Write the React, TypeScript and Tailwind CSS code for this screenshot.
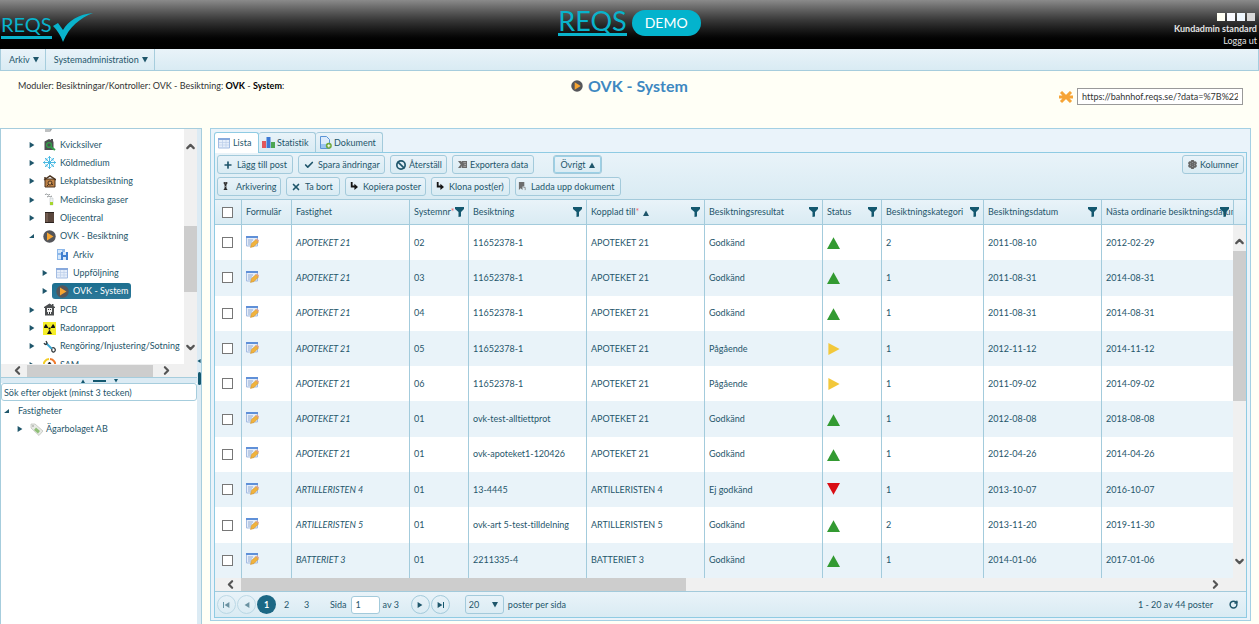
import React, { useState } from 'react';
import { ChevronUp, ChevronDown, ChevronLeft, ChevronRight, Plus, Check, Ban, X, Settings, RotateCw } from 'lucide-react';

type Status = 'ok' | 'pending' | 'failed';

interface Inspection {
  property: string;
  system: string;
  inspection: string;
  status: Status;
  category: number;
  date: string;
  next: string;
}

const inspections: Inspection[] = [
  { property: 'APOTEKET 21', system: '02', inspection: '11652378-1', status: 'ok', category: 2, date: '2011-08-10', next: '2012-02-29' },
  { property: 'APOTEKET 21', system: '03', inspection: '11652378-1', status: 'ok', category: 1, date: '2011-08-31', next: '2014-08-31' },
  { property: 'APOTEKET 21', system: '04', inspection: '11652378-1', status: 'ok', category: 1, date: '2011-08-31', next: '2014-08-31' },
  { property: 'APOTEKET 21', system: '05', inspection: '11652378-1', status: 'pending', category: 1, date: '2012-11-12', next: '2014-11-12' },
  { property: 'APOTEKET 21', system: '06', inspection: '11652378-1', status: 'pending', category: 1, date: '2011-09-02', next: '2014-09-02' },
  { property: 'APOTEKET 21', system: '01', inspection: 'ovk-test-alltiettprot', status: 'ok', category: 1, date: '2012-08-08', next: '2018-08-08' },
  { property: 'APOTEKET 21', system: '01', inspection: 'ovk-apoteket1-120426', status: 'ok', category: 1, date: '2012-04-26', next: '2014-04-26' },
  { property: 'ARTILLERISTEN 4', system: '01', inspection: '13-4445', status: 'failed', category: 1, date: '2013-10-07', next: '2016-10-07' },
  { property: 'ARTILLERISTEN 5', system: '01', inspection: 'ovk-art 5-test-tilldelning', status: 'ok', category: 2, date: '2013-11-20', next: '2019-11-30' },
  { property: 'BATTERIET 3', system: '01', inspection: '2211335-4', status: 'ok', category: 1, date: '2014-01-06', next: '2017-01-06' },
];

const resultText: Record<Status, string> = {
  ok: 'Godkänd',
  pending: 'Pågående',
  failed: 'Ej godkänd',
};

const columns = [
  { title: 'Formulär', width: 'w-[50px]' },
  { title: 'Fastighet', width: 'w-[118px]' },
  { title: 'Systemnr', width: 'w-[59px]', required: true, filter: true },
  { title: 'Besiktning', width: 'w-[118px]', filter: true },
  { title: 'Kopplad till', width: 'w-[118px]', required: true, sorted: true, filter: true },
  { title: 'Besiktningsresultat', width: 'w-[118px]', filter: true },
  { title: 'Status', width: 'w-[59px]', filter: true },
  { title: 'Besiktningskategori', width: 'w-[102px]', filter: true },
  { title: 'Besiktningsdatum', width: 'w-[118px]', filter: true },
  { title: 'Nästa ordinarie besiktningsdatum', width: '', filter: true },
];

const barGradient = 'bg-linear-to-b from-[#e9f3f9] to-[#d9ebf3]';
const buttonStyle = `flex h-[19px] items-center rounded-[3px] border border-[#a3cadb] ${barGradient} whitespace-nowrap`;

/* Icons */

const TriangleIcon = ({ dir, className = 'size-[6px]' }: { dir: 'up' | 'down' | 'right' | 'left'; className?: string }) => {
  const points = {
    up: '5,1 10,10 0,10',
    down: '0,0 10,0 5,9',
    right: '1,0 9,5 1,10',
    left: '9,0 1,5 9,10',
  };
  return (
    <svg viewBox="0 0 10 10" preserveAspectRatio="none" className={`shrink-0 fill-current ${className}`}>
      <polygon points={points[dir]} />
    </svg>
  );
};

const OpenNodeIcon = () => (
  <svg viewBox="0 0 6 6" className="size-[6px] shrink-0 fill-current">
    <path d="M5 1v4H0z" />
  </svg>
);

const PlayIcon = ({ className = 'size-[13px]' }: { className?: string }) => (
  <svg viewBox="0 0 13 13" className={`shrink-0 ${className}`}>
    <circle cx="6.5" cy="6.5" r="6.2" fill="#55565a" />
    <path d="M4 2.500l6.500 4-6.500 4z" fill="#f7a531" />
  </svg>
);

const FilterIcon = () => (
  <svg viewBox="0 0 9 10" className="h-[10px] w-[9px] fill-[#14586f]">
    <path d="M0 0h9v2L6 5v4.500L3.500 10V5L0 2z" />
  </svg>
);

const HouseIcon = ({ kind }: { kind: 'search' | 'play' | 'skull' }) => (
  <svg viewBox="0 0 13 13" className="size-[13px] shrink-0">
    {kind === 'play' && (
      <>
        <path d="M2 4h10v8H2z" fill="#bd8145" stroke="#4c3521" />
        <path d="M1 5l6-4 6 4M2 2v3" fill="none" stroke="#4c3521" strokeWidth="1.500" />
        <circle cx="7" cy="8" r="2" fill="#d9a365" stroke="#4c3521" />
        <path d="M4 11l2-2M8 8l2 2" stroke="#4c3521" />
      </>
    )}
    {kind === 'search' && (
      <>
        <path d="M1.500 3.500L6 1l2 1V1h2v2l.5 1v8h-9z" fill="#4d4f51" />
        <circle cx="6" cy="7" r="2.400" fill="none" stroke="#32a14a" strokeWidth="1.300" />
        <path d="M8 9l4 3" stroke="#32a14a" strokeWidth="2" />
      </>
    )}
    {kind === 'skull' && (
      <>
        <path d="M1 4l5.500-3.500L9 2V1h1.500v2L12 4v1h-1v7.500H2V5H1z" fill="#4d4f51" />
        <path d="M4 5h5v4H8v2H5V9H4z" fill="#f0f0f0" />
        <path d="M5 6h1v1H5zM7 6h1v1H7zM6 9h1v2H6z" fill="#333" />
      </>
    )}
  </svg>
);

const SnowIcon = () => (
  <svg viewBox="0 0 13 13" className="size-[13px] shrink-0" fill="none" stroke="#49b9e3">
    <path d="M6.500 0v13M0 6.500h13M2 2l9 9M11 2l-9 9" strokeWidth="1" />
    <path d="M5 1l1.500 1.500L8 1M5 12l1.500-1.500L8 12M1 5l1.500 1.500L1 8M12 5l-1.500 1.500L12 8M2 4h2V2M9 2v2h2M2 9h2v2M9 11V9h2" strokeWidth=".8" />
  </svg>
);

const GasIcon = () => (
  <svg viewBox="0 0 13 13" className="size-[13px] shrink-0">
    <path d="M2 2c2-3 3 2 5-1M4 4c2-2 3 1 5-1" fill="none" stroke="#8b9092" />
    <path d="M7 5h3v7H7z" fill="#eef1f2" stroke="#b7bdc0" strokeWidth=".5" />
    <path d="M7 9h3v3H7z" fill="#a6d62c" />
  </svg>
);

const BarrelIcon = () => (
  <svg viewBox="0 0 13 13" className="size-[13px] shrink-0">
    <path d="M2.500 1h8l.5 1v9l-.5 1h-8L2 11V2z" fill="#5a473d" />
    <path d="M2 1.500h9M2 11.500h9" stroke="#2c2320" />
    <path d="M4 2v9" stroke="#8a7567" />
  </svg>
);

const ArchiveIcon = () => (
  <svg viewBox="0 0 13 13" className="size-[13px] shrink-0">
    <path d="M1 1h8v11H1z" fill="#8db8ea" />
    <path d="M2 2h4v3H2zM2 7h3v4H2z" fill="#d6e8fb" />
    <path d="M5 4h7v8H5z" fill="#3f7fd0" />
    <path d="M7 4h3v3H7zM7 9h3v3H7z" fill="#d6e8fb" />
  </svg>
);

const TableIcon = ({ pencil = false }: { pencil?: boolean }) => (
  <svg viewBox="0 0 13 13" className="size-[13px] shrink-0">
    <path d="M.5 1.500h11v9.500H.5z" fill="#e6eefa" stroke="#a3bce2" />
    <path d="M0 1h12v2H0z" fill={pencil ? '#5f90d8' : '#88a9dc'} />
    {pencil ? (
      <>
        <path d="M2 5h5M2 7h4M2 9h3" stroke="#7d9ac6" strokeWidth=".8" />
        <path d="M4.500 12.500l1-4 4.500-4 2.500 2.500-4.500 4.500z" fill="#f1b33c" stroke="#c98a2a" strokeWidth=".5" />
        <path d="M10 4.500l1-1 2 2-.7 1.300z" fill="#e0a090" />
      </>
    ) : (
      <path d="M1 5.500h10M1 8h10M4.500 3v7M8 3v7" stroke="#bccfea" strokeWidth=".7" />
    )}
  </svg>
);

const RadonIcon = () => (
  <svg viewBox="0 0 13 13" className="size-[13px] shrink-0">
    <path d="M0 0h13v13H0z" fill="#f5ee28" />
    <path d="M5.500 6H1c0-2 1-3 2-4zM7.500 6H12c0-2-1-3-2-4zM6.500 7.500L4 12h5z" fill="#111" />
    <circle cx="6.500" cy="6.500" r="1.200" fill="#111" stroke="#f5ee28" strokeWidth=".5" />
  </svg>
);

const WrenchIcon = () => (
  <svg viewBox="0 0 13 13" className="size-[13px] shrink-0" fill="none">
    <path d="M3 3l6 6" stroke="#39a6d2" strokeWidth="2" />
    <path d="M1 3c1 2 3 2 3 0L3 1M9 8c2-1 4 1 3 3-1 2-4 1-3-2" stroke="#353a3d" strokeWidth="1.300" />
  </svg>
);

const SamIcon = () => (
  <svg viewBox="0 0 13 13" className="size-[13px] shrink-0" fill="none">
    <path d="M1 8a5.500 5.500 0 0 1 5-7" stroke="#f3cd25" strokeWidth="2" />
    <path d="M7 1a5.500 5.500 0 0 1 5 7" stroke="#ef7a2c" strokeWidth="2" />
    <path d="M6.500 4v6M5 6l1.500-2L8 6" stroke="#222" />
  </svg>
);

const StampIcon = () => (
  <svg viewBox="0 0 13 13" className="size-[13px] shrink-0">
    <path d="M6 1h5l-1 7-3 4H2l2-4z" fill="#a5a8aa" />
    <path d="M2 8h5v4H2z" fill="#bfc1c2" />
  </svg>
);

const TagIcon = () => (
  <svg viewBox="0 0 13 13" className="size-[13px] shrink-0">
    <path d="M1 1h4l8 7-4 4.500-8-7.500z" fill="#e8eae6" stroke="#b9bdb6" strokeWidth=".7" />
    <path d="M6 4.500L10 8l-2 2.500L4 7z" fill="#8fbf77" />
    <circle cx="3" cy="3" r=".8" fill="#8b8f88" />
  </svg>
);

const ChartIcon = () => (
  <svg viewBox="0 0 13 13" className="size-[13px] shrink-0">
    <path d="M0 5h4v7H0z" fill="#e2575a" />
    <path d="M4.500 1h4v11h-4z" fill="#3c78d4" />
    <path d="M9 6h4v6H9z" fill="#4da653" />
  </svg>
);

const DocumentIcon = () => (
  <svg viewBox="0 0 13 13" className="size-[13px] shrink-0">
    <path d="M1.500.5h6l3 3v9h-9z" fill="#dcebfb" stroke="#5b94d6" />
    <path d="M2 8h8v4H2z" fill="#9cc4f0" />
    <circle cx="9.800" cy="9.800" r="3" fill="#6fa83a" />
    <path d="M9.800 8.300v3M8.300 9.800h3" stroke="#fff" />
  </svg>
);

const ExcelIcon = () => (
  <svg viewBox="0 0 10 10" className="size-[9px] shrink-0">
    <path d="M4 1h6v8H4zM0 1h3l2 3 2-3h2L6 5l3 4H6L4 6 3 9H0l3-4z" fill="#6b6b6b" />
    <path d="M6 3h3M7 5h2M6 7h3" stroke="#ddd" strokeWidth=".6" />
  </svg>
);

const ColumnPinIcon = () => (
  <svg viewBox="0 0 10 10" className="size-[9px] shrink-0">
    <path d="M3 0h4v2l-1 1v4l1 1v1H3V8l1-1V3L3 2z" fill="#2b2b2b" />
    <path d="M4 1h2M4 5h2" stroke="#bbb" strokeWidth=".7" />
  </svg>
);

const CopyIcon = () => (
  <svg viewBox="0 0 10 10" className="size-[9px] shrink-0">
    <path d="M2 0h2v4h2V2l4 3.500L6 9V6H2z" fill="#151515" />
  </svg>
);

const UploadIcon = () => (
  <svg viewBox="0 0 10 10" className="size-[9px] shrink-0">
    <path d="M1 0h6v5H5v4l-2-2-2 2z" fill="#6d6d6d" />
    <path d="M6 6h2v3" fill="none" stroke="#8d8d8d" />
  </svg>
);

const AsteriskIcon = () => (
  <svg viewBox="0 0 14 14" className="size-[14px] shrink-0" stroke="#f6a436" strokeWidth="3">
    <path d="M2 2l10 10M12 2L2 12M0 7h14" />
  </svg>
);

const StatusIcon = ({ status }: { status: Status }) => {
  if (status === 'ok') return <TriangleIcon dir="up" className="size-[13px] text-[#339a32]" />;
  if (status === 'pending') return <TriangleIcon dir="right" className="h-[12px] w-[14px] text-[#f2c83b]" />;
  return <TriangleIcon dir="down" className="size-[13px] text-[#d90d14]" />;
};

/* Header */

const Header = () => (
  <header className="grid h-[49px] shrink-0 grid-cols-3 bg-linear-to-b from-[#8b8b8b] via-[#3a3a3a] via-40% to-black to-95%">
    <div className="flex items-start pt-[13px] pl-px">
      <span className="border-b-3 border-[#09b3cc] text-[20px] leading-[23px] text-[#09b3cc]">REQS</span>
      <svg viewBox="0 0 42 29" className="h-[29px] w-[42px]">
        <path d="M1 13l5-3 5 7C16 8 27 1 41 0 28 5 17 14 11 29 9 23 5 17 1 13z" fill="#09b3cc" />
      </svg>
    </div>
    <div className="flex items-start justify-center gap-[5px] pt-[8px]">
      <span className="border-b-3 border-[#09b3cc] text-[27px] leading-[25px] text-[#09b3cc]">REQS</span>
      <span className="mt-[2px] flex h-[26px] w-[69px] items-center justify-center rounded-full bg-[#03b3cd] text-[14px] text-white">DEMO</span>
    </div>
    <div className="flex flex-col items-end pt-[13px] pr-[2px] text-[9px] leading-[12px] text-[#e4e4e4]">
      <div className="flex gap-[2px] pr-[2px] pb-[2px]">
        <button aria-label="Tema gult" className="size-[8px] bg-[#fffff4]" />
        <button aria-label="Tema vitt" className="size-[8px] bg-[#f8faff]" />
        <button aria-label="Tema blått" className="size-[8px] bg-[#eff7fe]" />
        <button aria-label="Tema grått" className="size-[8px] bg-[#d8d8d8]" />
      </div>
      <span className="font-bold">Kundadmin standard</span>
      <a href="#logout">Logga ut</a>
    </div>
  </header>
);

const MenuBar = () => (
  <nav className={`flex h-[22px] shrink-0 border border-t-0 border-[#a6cddd] ${barGradient}`}>
    {['Arkiv', 'Systemadministration'].map((item) => (
      <button key={item} className="flex items-center gap-[3px] border-r border-[#a6cddd] pr-[6px] pl-[8px]">
        {item}
        <TriangleIcon dir="down" />
      </button>
    ))}
  </nav>
);

const TitleBar = () => (
  <div className="grid h-[57px] shrink-0 grid-cols-3 items-start">
    <p className="pt-[8px] pl-[18px] leading-[14px] whitespace-nowrap text-[#333]">
      Moduler: Besiktningar/Kontroller: OVK - Besiktning: <b className="text-black">OVK</b> - <b className="text-black">System</b>:
    </p>
    <h1 className="flex items-center justify-center gap-[5px] pt-[5px] text-[16px] leading-[20px] font-bold text-[#3d88c1]">
      <PlayIcon className="size-[12px]" />
      OVK - System
    </h1>
    <div className="flex items-center justify-end gap-[4px] pt-[17px] pr-[16px]">
      <AsteriskIcon />
      <input
        aria-label="Länk"
        defaultValue="https://bahnhof.reqs.se/?data=%7B%22module%22"
        className="h-[17px] w-[166px] border border-[#999] bg-white px-[4px] text-[#333]"
      />
    </div>
  </div>
);

/* Left side */

interface TreeRowProps {
  label: string;
  icon: React.ReactNode;
  level?: number;
  state?: 'open' | 'closed' | 'leaf';
  selected?: boolean;
}

const TreeRow = ({ label, icon, level = 1, state = 'closed', selected = false }: TreeRowProps) => (
  <li className={`flex flex-1 items-center whitespace-nowrap ${level === 1 ? 'pl-[28px]' : 'pl-[41px]'}`}>
    <span className="flex w-[10px] shrink-0">
      {state === 'open' && <OpenNodeIcon />}
      {state === 'closed' && <TriangleIcon dir="right" />}
    </span>
    <span
      className={`flex h-[16px] items-center gap-[4px] rounded-[3px] pr-[2px] pl-[4px] ${selected ? 'bg-linear-to-b from-[#1c6f90] to-[#2c7899] text-white' : ''}`}
    >
      {icon}
      {label}
    </span>
  </li>
);

const Sidebar = () => (
  <aside className="flex w-[202px] shrink-0 border border-b-0 border-[#a6cddd] bg-white">
    <div className="flex min-w-0 flex-1 flex-col">
      <div className="flex h-[235px] shrink-0">
        <div className="min-w-0 flex-1 overflow-hidden">
          <ul className="-mt-[12px] flex h-[257px] flex-col">
            <TreeRow label="Kundiskarier" icon={<StampIcon />} />
            <TreeRow label="Kvicksilver" icon={<HouseIcon kind="search" />} />
            <TreeRow label="Köldmedium" icon={<SnowIcon />} />
            <TreeRow label="Lekplatsbesiktning" icon={<HouseIcon kind="play" />} />
            <TreeRow label="Medicinska gaser" icon={<GasIcon />} />
            <TreeRow label="Oljecentral" icon={<BarrelIcon />} />
            <TreeRow label="OVK - Besiktning" icon={<PlayIcon />} state="open" />
            <TreeRow label="Arkiv" icon={<ArchiveIcon />} level={2} state="leaf" />
            <TreeRow label="Uppföljning" icon={<TableIcon />} level={2} />
            <TreeRow label="OVK - System" icon={<PlayIcon />} level={2} selected />
            <TreeRow label="PCB" icon={<HouseIcon kind="skull" />} />
            <TreeRow label="Radonrapport" icon={<RadonIcon />} />
            <TreeRow label="Rengöring/Injustering/Sotning" icon={<WrenchIcon />} />
            <TreeRow label="SAM" icon={<SamIcon />} />
          </ul>
        </div>
        <div className="flex w-[13px] flex-col items-center bg-[#f0f0f0] pt-[11px] pb-[10px] text-[#555]">
          <ChevronUp className="size-[13px] shrink-0" strokeWidth={4} />
          <div className="mt-[73px] mb-auto h-[66px] w-full bg-[#cdcdcd]" />
          <ChevronDown className="size-[13px] shrink-0" strokeWidth={4} />
        </div>
      </div>
      <div className="flex h-[13px] shrink-0 items-center bg-[#f0f0f0] text-[#555]">
        <ChevronLeft className="ml-[10px] size-[13px]" strokeWidth={4} />
        <div className="ml-[3px] h-[12px] w-[126px] bg-[#cdcdcd]" />
        <ChevronRight className="ml-[7px] size-[13px]" strokeWidth={4} />
      </div>
      <div className="flex h-[6px] shrink-0 items-center justify-center gap-[8px] border-t border-[#a6cddd] bg-[#dcebf4] text-[#14586f]">
        <TriangleIcon dir="up" className="size-[4px]" />
        <span className="h-[2px] w-[13px] bg-[#14586f]" />
        <TriangleIcon dir="down" className="size-[4px]" />
      </div>
      <input
        aria-label="Sök efter objekt"
        placeholder="Sök efter objekt (minst 3 tecken)"
        className="h-[18px] w-full shrink-0 rounded-[3px] border border-[#a6cddd] px-[2px] placeholder:text-[#1f566b]"
      />
      <ul className="pt-[1px]">
        <li className="flex h-[18px] items-center gap-[8px] pl-[3px]">
          <OpenNodeIcon />
          Fastigheter
        </li>
        <li className="flex h-[18px] items-center pl-[16px]">
          <TriangleIcon dir="right" />
          <span className="flex items-center gap-[3px] pl-[7px]">
            <TagIcon />
            Ägarbolaget AB
          </span>
        </li>
      </ul>
    </div>
    <div className="flex w-[4px] shrink-0 flex-col items-center bg-[#dcebf4] pt-[230px] text-[#14586f]">
      <TriangleIcon dir="left" className="size-[4px]" />
      <span className="mt-[9px] h-[13px] w-[3px] rounded-xs bg-[#14586f]" />
    </div>
  </aside>
);

/* Grid */

const Tabs = () => (
  <div role="tablist" className="flex h-[20px] shrink-0">
    <button role="tab" aria-selected className="z-10 -mb-px flex h-[21px] w-[45px] items-center gap-[2px] rounded-t-[3px] border border-b-0 border-[#8fcbe3] bg-white pl-[3px]">
      <TableIcon />
      Lista
    </button>
    <button role="tab" aria-selected={false} className={`flex w-[57px] items-center gap-[2px] rounded-t-[3px] border border-b-0 border-l-0 border-[#a3cadb] pl-[3px] ${barGradient}`}>
      <ChartIcon />
      Statistik
    </button>
    <button role="tab" aria-selected={false} className={`flex w-[67px] items-center gap-[2px] rounded-t-[3px] border border-b-0 border-l-0 border-[#a3cadb] pl-[3px] ${barGradient}`}>
      <DocumentIcon />
      Dokument
    </button>
  </div>
);

const Toolbar = () => (
  <div className={`flex h-[47px] shrink-0 items-start justify-between border-b border-[#a3cadb] px-[2px] pt-[2px] ${barGradient}`}>
    <div className="flex flex-col gap-[3px]">
      <div className="flex gap-[5px]">
        <button className={`${buttonStyle} w-[76px] gap-[4px] pl-[5px]`}>
          <Plus className="size-[10px]" strokeWidth={4} />
          Lägg till post
        </button>
        <button className={`${buttonStyle} w-[87px] gap-[4px] pl-[5px]`}>
          <Check className="size-[10px]" strokeWidth={4} />
          Spara ändringar
        </button>
        <button className={`${buttonStyle} w-[57px] gap-[3px] pl-[5px]`}>
          <Ban className="size-[10px]" strokeWidth={4} />
          Återställ
        </button>
        <button className={`${buttonStyle} w-[82px] gap-[3px] pl-[5px]`}>
          <ExcelIcon />
          Exportera data
        </button>
        <button className={`${buttonStyle} ml-[14px] w-[49px] justify-center gap-[3px] ring-1 ring-[#9bd0e6] ring-inset`}>
          Övrigt
          <TriangleIcon dir="up" />
        </button>
      </div>
      <div className="flex gap-[5px]">
        <button className={`${buttonStyle} w-[64px] gap-[6px] pl-[3px]`}>
          <ColumnPinIcon />
          Arkivering
        </button>
        <button className={`${buttonStyle} w-[54px] gap-[4px] pl-[4px]`}>
          <X className="size-[10px]" strokeWidth={4} />
          Ta bort
        </button>
        <button className={`${buttonStyle} w-[81px] gap-[5px] pl-[3px]`}>
          <CopyIcon />
          Kopiera poster
        </button>
        <button className={`${buttonStyle} w-[79px] gap-[5px] pl-[3px]`}>
          <CopyIcon />
          Klona post(er)
        </button>
        <button className={`${buttonStyle} w-[106px] gap-[4px] pl-[2px]`}>
          <UploadIcon />
          Ladda upp dokument
        </button>
      </div>
    </div>
    <button className={`${buttonStyle} w-[62px] gap-[3px] pl-[5px]`}>
      <Settings className="size-[9px] text-[#666]" strokeWidth={5} />
      Kolumner
    </button>
  </div>
);

const checkbox = 'block size-[11px] appearance-none border border-[#777] bg-white';
const cell = 'border-l border-[#a3cbdc] pl-[4px] whitespace-nowrap';

const Grid = () => (
  <div className="flex min-h-0 flex-1 flex-col">
    <div className="flex min-h-0 flex-1">
      <div className="min-w-0 flex-1 overflow-hidden">
        <table className="h-[378px] w-full table-fixed border-separate border-spacing-0 text-left">
          <thead>
            <tr className={`h-[25px] ${barGradient}`}>
              <th className="w-[26px] border-b border-[#a3cadb] pl-[7px]">
                <input type="checkbox" aria-label="Markera alla" className={checkbox} />
              </th>
              {columns.map((col) => (
                <th key={col.title} className={`${cell} ${col.width} relative h-[25px] border-b font-normal`}>
                  {col.title}
                  {col.required && <span className="text-[#f06a6a]">*</span>}
                  {col.sorted && <TriangleIcon dir="up" className="ml-[4px] inline size-[6px]" />}
                  {col.filter && (
                    <button aria-label={`Filtrera ${col.title}`} className="absolute top-[7px] right-[4px]">
                      <FilterIcon />
                    </button>
                  )}
                </th>
              ))}
            </tr>
          </thead>
          <tbody>
            {inspections.map((row, i) => (
              <tr key={i} className="even:bg-[#e9f3f9]">
                <td className="pl-[7px]">
                  <input type="checkbox" aria-label={`Markera rad ${i + 1}`} className={checkbox} />
                </td>
                <td className={cell}>
                  <button aria-label="Öppna formulär" className="block pb-[3px]">
                    <TableIcon pencil />
                  </button>
                </td>
                <td className={`${cell} italic`}>{row.property}</td>
                <td className={cell}>{row.system}</td>
                <td className={cell}>{row.inspection}</td>
                <td className={cell}>{row.property}</td>
                <td className={cell}>{resultText[row.status]}</td>
                <td className={cell}>
                  <StatusIcon status={row.status} />
                </td>
                <td className={cell}>{row.category}</td>
                <td className={cell}>{row.date}</td>
                <td className={cell}>{row.next}</td>
              </tr>
            ))}
          </tbody>
        </table>
      </div>
      <div className="flex w-[13px] shrink-0 flex-col items-center bg-[#f0f0f0] text-[#555]">
        <div className={`h-[25px] w-full shrink-0 border-b border-l border-[#a3cadb] ${barGradient}`} />
        <ChevronUp className="mt-[10px] size-[13px] shrink-0" strokeWidth={4} />
        <div className="mt-[3px] mb-auto h-[150px] w-full bg-[#cdcdcd]" />
        <ChevronDown className="mb-[10px] size-[13px] shrink-0" strokeWidth={4} />
      </div>
    </div>
    <div className="flex h-[13px] shrink-0 items-center bg-[#f0f0f0] pr-[24px] pl-[9px] text-[#555]">
      <ChevronLeft className="size-[13px]" strokeWidth={4} />
      <div className="ml-[4px] h-full w-[445px] bg-[#cdcdcd]" />
      <ChevronRight className="ml-auto size-[13px]" strokeWidth={4} />
    </div>
  </div>
);

const PagerButton = ({ label, dir, end, faded }: { label: string; dir: 'left' | 'right'; end?: boolean; faded?: boolean }) => (
  <button
    aria-label={label}
    className={`flex size-[19px] items-center justify-center rounded-full border border-[#a3cadb] ${faded ? 'opacity-60' : ''}`}
  >
    {end && dir === 'left' && <span className="h-[6px] w-px bg-[#14586f]" />}
    <TriangleIcon dir={dir} />
    {end && dir === 'right' && <span className="h-[6px] w-px bg-[#14586f]" />}
  </button>
);

const Pager = () => {
  const [page, setPage] = useState(1);

  return (
    <footer className={`flex h-[26px] shrink-0 items-center border-t border-[#a3cadb] px-[2px] ${barGradient}`}>
      <div className="flex gap-[1px]">
        <PagerButton label="Första sidan" dir="left" end faded />
        <PagerButton label="Föregående sida" dir="left" faded />
        {[1, 2, 3].map((n) => (
          <button
            key={n}
            onClick={() => setPage(n)}
            className={`size-[19px] rounded-full ${page === n ? 'bg-[#1c6885] font-bold text-white' : ''}`}
          >
            {n}
          </button>
        ))}
      </div>
      <label className="flex items-center gap-[4px] pl-[14px]">
        Sida
        <input value={page} readOnly className="h-[18px] w-[29px] rounded-[3px] border border-[#a3cadb] bg-white px-[4px]" />
      </label>
      <span className="pl-[3px]">av 3</span>
      <div className="flex gap-[1px] pl-[12px]">
        <PagerButton label="Nästa sida" dir="right" />
        <PagerButton label="Sista sidan" dir="right" end />
      </div>
      <label className="flex items-center gap-[4px] pl-[15px]">
        <span className="relative">
          <select defaultValue="20" className="h-[19px] w-[39px] appearance-none rounded-[3px] border border-[#a3cadb] px-[3px]">
            <option>10</option>
            <option>20</option>
            <option>50</option>
          </select>
          <TriangleIcon dir="down" className="pointer-events-none absolute top-[7px] right-[6px] size-[6px]" />
        </span>
        poster per sida
      </label>
      <span className="ml-auto pr-[16px]">1 - 20 av 44 poster</span>
      <button aria-label="Uppdatera" className="pr-[6px]">
        <RotateCw className="size-[9px]" strokeWidth={4} />
      </button>
    </footer>
  );
};

export default function App() {
  return (
    <div className="flex h-screen flex-col overflow-hidden bg-[#fffff6] font-['Lato','Open_Sans',sans-serif] text-[9px] leading-[12px] text-[#1f566b] [font-variant-ligatures:none]">
      <Header />
      <MenuBar />
      <TitleBar />
      <div className="flex min-h-0 flex-1">
        <Sidebar />
        <main className="mr-[8px] mb-[3px] ml-[8px] flex min-w-0 flex-1 flex-col border border-[#a3d0e4] bg-[#eaf3fa] p-[3px] pb-[2px]">
          <Tabs />
          <div className="flex min-h-0 flex-1 flex-col border border-[#8fcbe3] bg-white">
            <Toolbar />
            <Grid />
            <Pager />
          </div>
        </main>
      </div>
    </div>
  );
}
